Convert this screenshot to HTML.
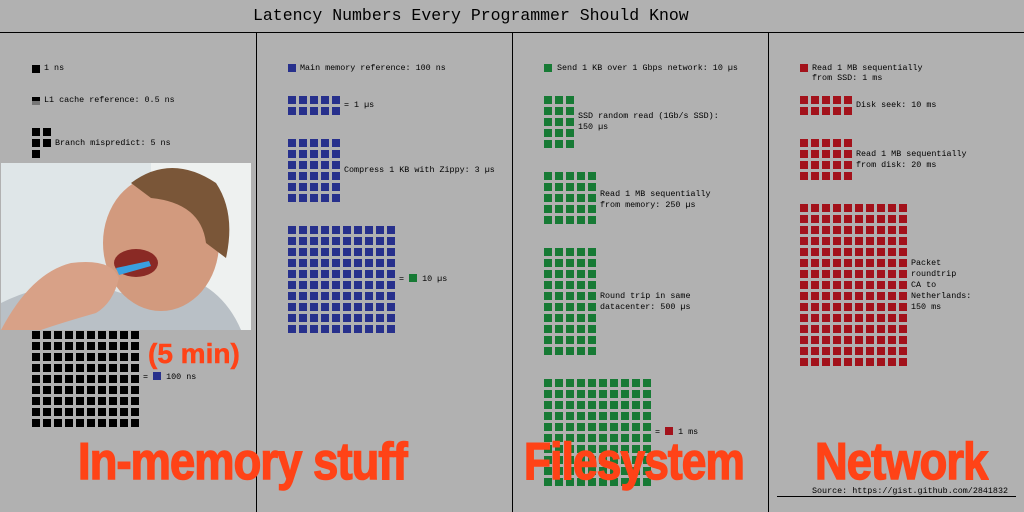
<!DOCTYPE html>
<html><head><meta charset="utf-8"><style>
body{margin:0;width:1024px;height:512px;background:#b1b1b1;position:relative;overflow:hidden;font-family:"Liberation Mono",monospace;font-size:8.4px;color:#000}
.a{position:absolute}
.t{position:absolute;line-height:11px;white-space:pre}
.g{position:absolute;background-image:linear-gradient(to right,transparent 8px,#b1b1b1 8px),linear-gradient(to bottom,transparent 8px,#b1b1b1 8px);background-size:11px 11px}
.k{background-color:#000}.b{background-color:#27308c}.gr{background-color:#177a35}.r{background-color:#a3121b}
.big{position:absolute;font-family:"Liberation Sans",sans-serif;font-weight:bold;color:#ff4317;font-size:52px;line-height:50px;white-space:nowrap;transform-origin:left top;-webkit-text-stroke:1.5px #ff4317;letter-spacing:-1px}
.sq{display:inline-block;width:8px;height:8px;vertical-align:-1px}
</style></head><body>
<div class="t" style="left:253px;top:6px;font-size:16.5px;line-height:20px">Latency Numbers Every Programmer Should Know</div>
<div class="a" style="left:0;top:32px;width:1024px;height:1px;background:#000"></div>
<div class="a" style="left:256px;top:32px;width:1px;height:480px;background:#000"></div>
<div class="a" style="left:512px;top:32px;width:1px;height:480px;background:#000"></div>
<div class="a" style="left:768px;top:32px;width:1px;height:480px;background:#000"></div>

<!-- black column -->
<div class="a k" style="left:32px;top:65px;width:8px;height:8px"></div>
<div class="t" style="left:44px;top:63px">1 ns</div>
<div class="a k" style="left:32px;top:97px;width:8px;height:4px"></div>
<div class="a" style="left:32px;top:101px;width:8px;height:4px;background:#777"></div>
<div class="t" style="left:44px;top:95px">L1 cache reference: 0.5 ns</div>
<div class="g k" style="left:32px;top:128px;width:19px;height:19px"></div>
<div class="a k" style="left:32px;top:150px;width:8px;height:8px"></div>
<div class="t" style="left:55px;top:138px">Branch mispredict: 5 ns</div>
<div class="g k" style="left:32px;top:320px;width:107px;height:107px"></div>
<div class="t" style="left:143px;top:372px">= <span class="sq b"></span> 100 ns</div>

<svg class="a" style="left:1px;top:163px" width="250" height="167" viewBox="0 0 250 167">
<rect width="250" height="167" fill="#dfe6e8"/>
<rect x="150" width="100" height="167" fill="#eef1f0"/>
<path d="M0 140 Q60 110 120 130 L170 110 Q220 120 240 167 L0 167Z" fill="#b9c0c6"/>
<ellipse cx="160" cy="80" rx="58" ry="68" fill="#d29a7e"/>
<path d="M130 20 Q170 -10 215 20 Q235 50 225 95 L205 80 Q200 40 150 35Z" fill="#7a5638"/>
<ellipse cx="135" cy="100" rx="22" ry="14" fill="#8a2a25"/>
<path d="M115 105 L148 98 L150 103 L118 112Z" fill="#3aa0e0"/>
<path d="M0 167 Q30 110 70 100 Q110 95 118 115 Q112 140 95 150 Q60 160 40 167Z" fill="#d8a187"/>
</svg>
<div class="big" style="left:148px;top:338px;font-size:28px;line-height:32px;-webkit-text-stroke:0.5px #ff4317;letter-spacing:0">(5 min)</div>

<!-- blue column -->
<div class="a b" style="left:288px;top:64px;width:8px;height:8px"></div>
<div class="t" style="left:300px;top:63px">Main memory reference: 100 ns</div>
<div class="g b" style="left:288px;top:96px;width:52px;height:19px"></div>
<div class="t" style="left:344px;top:100px">= 1 µs</div>
<div class="g b" style="left:288px;top:139px;width:52px;height:63px"></div>
<div class="t" style="left:344px;top:165px">Compress 1 KB with Zippy: 3 µs</div>
<div class="g b" style="left:288px;top:226px;width:107px;height:107px"></div>
<div class="t" style="left:399px;top:274px">= <span class="sq gr"></span> 10 µs</div>

<!-- green column -->
<div class="a gr" style="left:544px;top:64px;width:8px;height:8px"></div>
<div class="t" style="left:557px;top:63px">Send 1 KB over 1 Gbps network: 10 µs</div>
<div class="g gr" style="left:544px;top:96px;width:30px;height:52px"></div>
<div class="t" style="left:578px;top:111px">SSD random read (1Gb/s SSD):
150 µs</div>
<div class="g gr" style="left:544px;top:172px;width:52px;height:52px"></div>
<div class="t" style="left:600px;top:189px">Read 1 MB sequentially
from memory: 250 µs</div>
<div class="g gr" style="left:544px;top:248px;width:52px;height:107px"></div>
<div class="t" style="left:600px;top:291px">Round trip in same
datacenter: 500 µs</div>
<div class="g gr" style="left:544px;top:379px;width:107px;height:107px"></div>
<div class="t" style="left:655px;top:427px">= <span class="sq r"></span> 1 ms</div>

<!-- red column -->
<div class="a r" style="left:800px;top:64px;width:8px;height:8px"></div>
<div class="t" style="left:812px;top:63px;line-height:10px">Read 1 MB sequentially
from SSD: 1 ms</div>
<div class="g r" style="left:800px;top:96px;width:52px;height:19px"></div>
<div class="t" style="left:856px;top:100px">Disk seek: 10 ms</div>
<div class="g r" style="left:800px;top:139px;width:52px;height:41px"></div>
<div class="t" style="left:856px;top:149px">Read 1 MB sequentially
from disk: 20 ms</div>
<div class="g r" style="left:800px;top:204px;width:107px;height:162px"></div>
<div class="t" style="left:911px;top:258px">Packet
roundtrip
CA to
Netherlands:
150 ms</div>

<div class="big" style="left:78px;top:437px;transform:scaleX(0.87)">In-memory stuff</div>
<div class="big" style="left:524px;top:437px;transform:scaleX(0.85)">Filesystem</div>
<div class="big" style="left:815px;top:437px;transform:scaleX(0.87)">Network</div>

<div class="t" style="left:812px;top:486px">Source: https://gist.github.com/2841832</div>
<div class="a" style="left:777px;top:496px;width:239px;height:1px;background:#000"></div>
</body></html>
